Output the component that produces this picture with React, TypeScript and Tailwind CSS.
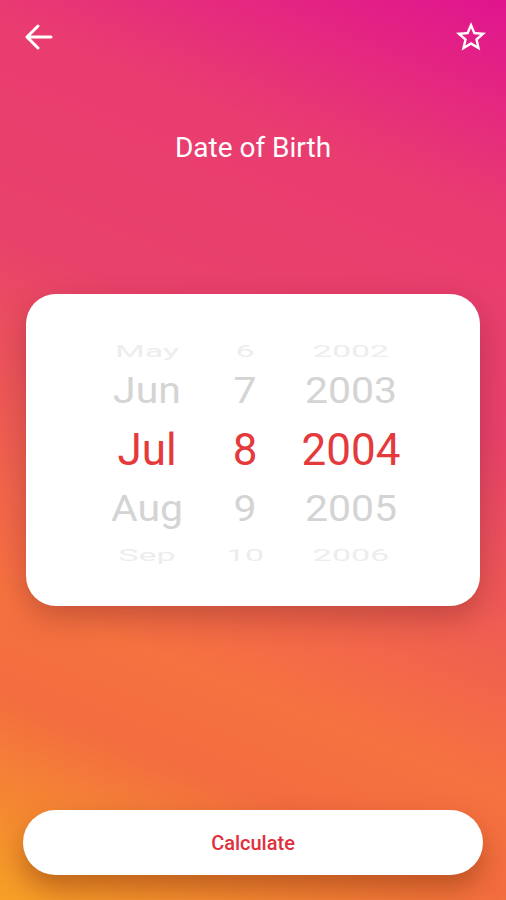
import { MdStarBorder } from "react-icons/md"

const cols = "grid grid-cols-[100px_96px_116px] pl-[71px]"

type Row = { m: string; d: string; y: string; kind: "far" | "near" | "active" }

const rows: Row[] = [
  { m: "May", d: "6", y: "2002", kind: "far" },
  { m: "Jun", d: "7", y: "2003", kind: "near" },
  { m: "Jul", d: "8", y: "2004", kind: "active" },
  { m: "Aug", d: "9", y: "2005", kind: "near" },
  { m: "Sep", d: "10", y: "2006", kind: "far" },
]

function PickerRow({ row }: { row: Row }) {
  let box = "h-[28px]"
  let text = "text-[34px] text-[#ededed] scale-y-[0.5]"
  if (row.kind === "near") {
    box = "h-[58px]"
    text = "text-[41px] text-[#d4d4d4] scale-y-[0.88]"
  } else if (row.kind === "active") {
    box = "h-[60px]"
    text = "text-[44px] text-[#e53a3c]"
  }
  return (
    <div className={`${cols} ${box}`}>
      {[row.m, row.d, row.y].map((v, i) => (
        <div key={i} className="flex items-center justify-center">
          <span className={`block leading-none ${text}`}>{v}</span>
        </div>
      ))}
    </div>
  )
}

export default function App() {
  return (
    <div className="flex h-[900px] w-full flex-col bg-[linear-gradient(22deg,#f6a126_0%,#f36c40_19%,#f67240_28%,#f06050_41%,#e8426a_60%,#e93c70_80%,#e0148f_100%)] font-['Roboto',sans-serif]">
      <div className="flex items-center justify-between px-[22px] pt-[19px]">
        <svg width="36" height="36" viewBox="0 0 36 36" fill="none">
          <path
            d="M5 18h24M16 7 5 18l11 11"
            stroke="white"
            strokeWidth="3"
            strokeLinecap="round"
            strokeLinejoin="round"
          />
        </svg>
        <MdStarBorder size={36} color="white" className="-mr-[5px]" />
      </div>

      <h1 className="mt-[79px] text-center text-[28px] leading-none text-white">
        Date of Birth
      </h1>

      <div className="mx-[26px] mt-[132px] rounded-[30px] bg-white py-[40px] shadow-[0_12px_30px_rgba(90,20,30,0.3)]">
        {rows.map((r) => (
          <PickerRow key={r.m} row={r} />
        ))}
      </div>

      <div className="mt-auto px-[23px] pb-[25px]">
        <button className="flex h-[65px] w-full items-center justify-center rounded-full bg-white text-[20px] font-medium text-[#e0303c] shadow-[0_14px_26px_rgba(140,60,10,0.5)]">
          Calculate
        </button>
      </div>
    </div>
  )
}
